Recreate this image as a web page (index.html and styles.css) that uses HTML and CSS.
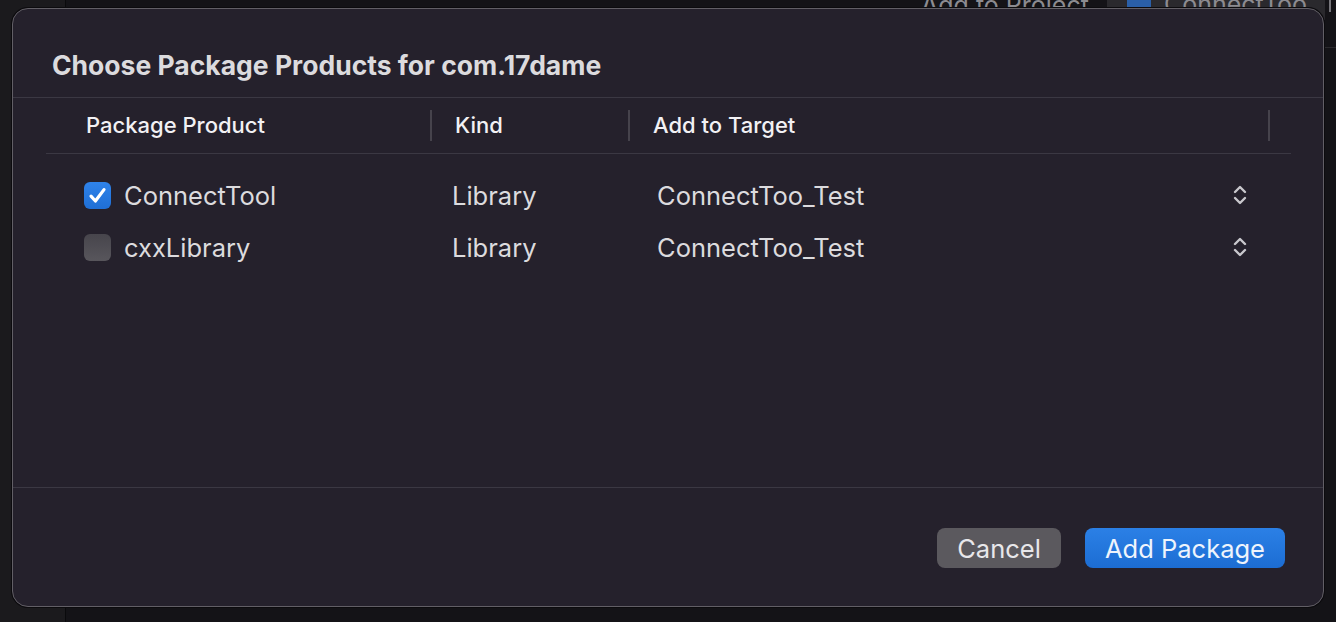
FILE: index.html
```html
<!DOCTYPE html>
<html lang="en">
<head>
<meta charset="utf-8">
<title>Choose Package Products</title>
<link rel="stylesheet" href="styles.css">
</head>
<body>
<div class="backdrop">
  <div class="side"></div>
  <div class="main">
    <div class="toolbar">
      <span class="tb-label">Add to Project</span>
      <span class="tb-popup"><span class="tb-icon"></span><span class="tb-text">ConnectToo</span></span>
      <span class="tb-bar"></span>
    </div>
  </div>
</div>

<div class="dialog">
  <div class="title">Choose Package Products for com.17dame</div>
  <div class="table">
    <div class="thead">
      <div class="th c1">Package Product</div>
      <div class="th c2 div">Kind</div>
      <div class="th c3 div">Add to Target</div>
      <div class="th c4 div"></div>
    </div>
    <div class="tbody">
      <div class="tr">
        <div class="td c1"><span class="check on"><svg viewBox="0 0 27 27" width="27" height="27"><path d="M7 14.2 L11.4 19 L20 7.6" fill="none" stroke="#fff" stroke-width="3.2" stroke-linecap="round" stroke-linejoin="round"/></svg></span><span class="name">ConnectTool</span></div>
        <div class="td c2">Library</div>
        <div class="td c3"><span>ConnectToo_Test</span><svg class="step" viewBox="0 0 16 24" width="16" height="24"><path d="M3 9 L8 4 L13 9 M3 15 L8 20 L13 15" fill="none" stroke="#c9c8cd" stroke-width="2.4" stroke-linecap="round" stroke-linejoin="round"/></svg></div>
        <div class="td c4"></div>
      </div>
      <div class="tr">
        <div class="td c1"><span class="check"></span><span class="name">cxxLibrary</span></div>
        <div class="td c2">Library</div>
        <div class="td c3"><span>ConnectToo_Test</span><svg class="step" viewBox="0 0 16 24" width="16" height="24"><path d="M3 9 L8 4 L13 9 M3 15 L8 20 L13 15" fill="none" stroke="#c9c8cd" stroke-width="2.4" stroke-linecap="round" stroke-linejoin="round"/></svg></div>
        <div class="td c4"></div>
      </div>
    </div>
  </div>
  <div class="footer">
    <button class="btn cancel">Cancel</button>
    <button class="btn primary">Add Package</button>
  </div>
</div>
</body>
</html>
```

FILE: styles.css
```css
* { box-sizing: border-box; }
html, body { margin: 0; padding: 0; }
body {
  width: 1336px;
  height: 622px;
  overflow: hidden;
  background: #131216;
  font-family: Inter, "Noto Sans", "Liberation Sans", sans-serif;
  position: relative;
}
.backdrop {
  display: flex;
  height: 622px;
}
.side {
  width: 66px;
  background: #1b1a1d;
  border-right: 1px solid #0a0a0c;
}
.main {
  flex: 1;
  background: #141317;
}
.toolbar {
  height: 48px;
  display: flex;
  align-items: flex-start;
  border-bottom: 1px solid #2a292d;
}
.tb-label {
  margin-left: 855px;
  margin-top: -10px;
  font-size: 25px;
  color: #8c8b90;
}
.tb-popup {
  margin-left: 18px;
  width: 218px;
  height: 20px;
  background: #2a292d;
  display: flex;
  align-items: flex-start;
}
.tb-icon {
  margin-left: 20px;
  width: 24px;
  height: 14px;
  background: #2a5fa8;
}
.tb-text {
  margin-left: 13px;
  margin-top: -11px;
  font-size: 25px;
  color: #8c8b90;
}
.tb-bar {
  margin-left: 4px;
  width: 2px;
  height: 12px;
  background: #77767b;
}

.dialog {
  position: absolute;
  left: 12px;
  top: 8px;
  width: 1312px;
  height: 599px;
  background: #25212c;
  border: 1px solid #625f66;
  border-radius: 16px;
  display: flex;
  flex-direction: column;
  color: #e4e3e6;
  box-shadow: 0 0 0 1px #0c0b0e;
}
.title {
  height: 89px;
  padding: 41px 0 0 39px;
  font-size: 26.5px;
  line-height: 30px;
  font-weight: 700;
  color: #dcdbde;
  border-bottom: 1px solid #3b3843;
}
.table {
  margin: 0 32px 0 33px;
  flex: 1;
}
.thead, .tr {
  display: grid;
  grid-template-columns: 384px 198px 640px 1fr;
}
.thead {
  height: 56px;
  border-bottom: 1px solid #3b3843;
  align-items: center;
}
.th {
  font-size: 22px;
  font-weight: 500;
  color: #f2f1f4;
  height: 31px;
  line-height: 31px;
}
.th.c1 { padding-left: 40px; }
.th.c2, .th.c3 { padding-left: 23px; }
.th.div { border-left: 2px solid #46434c; }
.tbody { padding-top: 15px; }
.tr { height: 52px; align-items: center; }
.td {
  font-size: 25.5px;
  color: #dcdbde;
  display: flex;
  align-items: center;
}
.td.c1 { padding-left: 38px; }
.td.c2 { padding-left: 22px; }
.td.c3 { padding-left: 29px; justify-content: space-between; padding-right: 20px; }
.check {
  width: 27px;
  height: 27px;
  border-radius: 6px;
  background: linear-gradient(#47454c, #58565c);
  margin-right: 13px;
  display: inline-block;
}
.check.on { background: linear-gradient(#2f83ea, #1f6fd6); }
.check svg { display: block; }
.step { display: block; }

.footer {
  height: 119px;
  border-top: 1px solid #3b3843;
  display: flex;
  justify-content: flex-end;
  align-items: flex-start;
  padding: 40px 38px 0 0;
  gap: 24px;
}
.btn {
  height: 40px;
  border: none;
  border-radius: 8px;
  font-family: inherit;
  font-size: 25.5px;
  color: #e8e7ea;
  padding: 0;
}
.cancel { width: 124px; background: #5b595e; }
.primary { width: 200px; background: linear-gradient(#2b80e6, #1c6dd3); color: #eef4fc; }
```
